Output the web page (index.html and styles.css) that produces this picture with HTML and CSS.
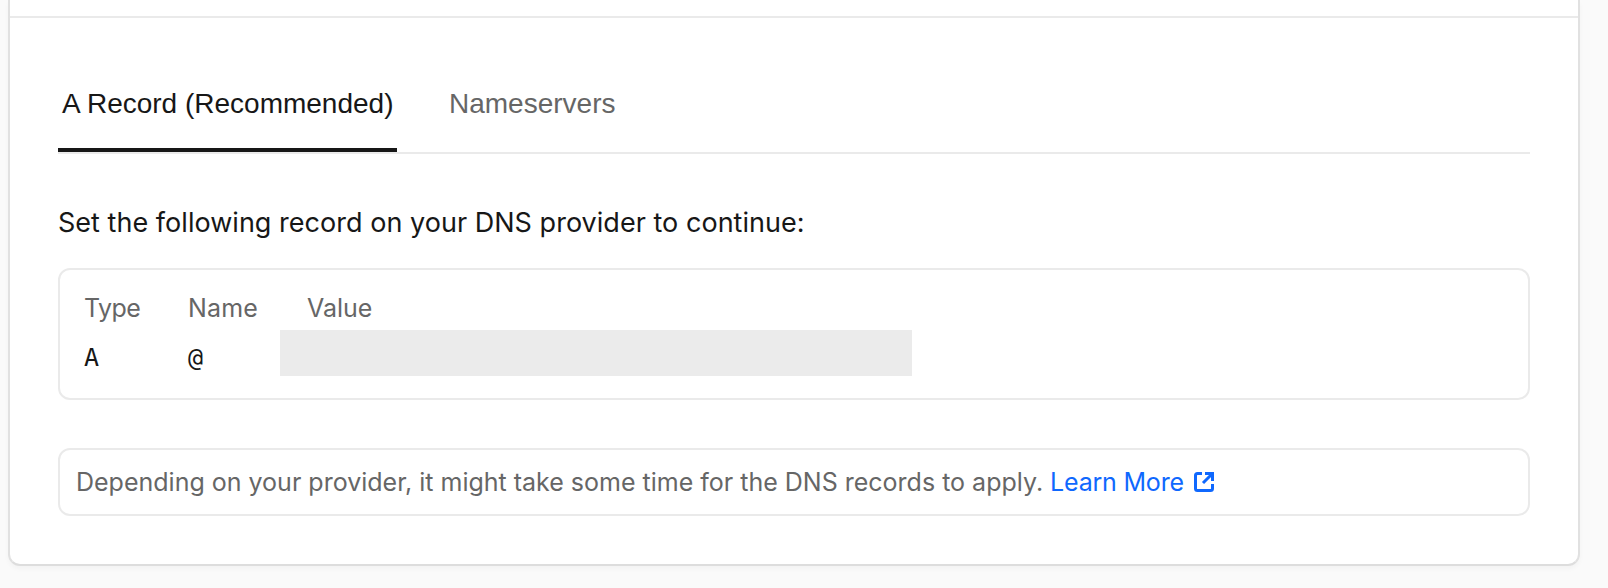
FILE: index.html
```html
<!DOCTYPE html>
<html lang="en">
<head>
<meta charset="utf-8">
<title>DNS records</title>
<link rel="stylesheet" href="styles.css">
</head>
<body>
<main class="card">
  <div class="card-top"></div>
  <section class="content">
    <nav class="tabs">
      <a class="tab tab-active"><span class="tab-label">A Record (Recommended)</span></a>
      <a class="tab"><span class="tab-label">Nameservers</span></a>
    </nav>
    <p class="intro"><span>Set the following record on your DNS provider to continue:</span></p>
    <div class="records">
      <div class="column column-type"><span class="head head-type">Type</span><span class="value">A</span></div>
      <div class="column column-name"><span class="head head-name">Name</span><span class="value">@</span></div>
      <div class="column"><span class="head head-value">Value</span><span class="redacted"></span></div>
    </div>
    <div class="note">
      <span class="note-text">Depending on your provider, it might take some time for the DNS records to apply.</span>
      <a class="link"><span class="link-text">Learn More</span>
        <svg class="icon" viewBox="0 0 20 20" fill="none" stroke="currentColor" stroke-width="3">
          <path d="M8 1.5H3.5Q1.5 1.5 1.5 3.5V16.5Q1.5 18.5 3.5 18.5H16.5Q18.5 18.5 18.5 16.5V12M11 1.5H18.5V9M18 2L9 11"/>
        </svg>
      </a>
    </div>
  </section>
</main>
</body>
</html>
```
FILE: styles.css
```css
* { box-sizing: border-box; }
body {
  margin: 0;
  height: 588px;
  overflow: hidden;
  padding: 0 28px 22px 8px;
  background: #fafafa;
  color: #171717;
  font-family: Inter, "Liberation Sans", sans-serif;
}
.card {
  height: 566px;
  border: 2px solid #e1e1e1;
  border-top: 0;
  border-bottom-color: #dddddd;
  border-radius: 0 0 12px 12px;
  background: #fff;
  box-shadow: 0 3px 5px rgba(0, 0, 0, 0.03);
}
.card-top { height: 18px; border-bottom: 2px solid #eaeaea; }
.content { padding: 0 48px; }
.tabs {
  display: flex;
  gap: 48px;
  height: 136px;
  border-bottom: 2px solid #eaeaea;
  font-family: "Liberation Sans", Arial, sans-serif;
  font-size: 28px;
  line-height: 40px;
  color: #666;
}
.tab { height: 134px; padding: 66px 4px 0; white-space: nowrap; }
.tab-active { width: 339px; color: #171717; border-bottom: 4px solid #171717; }
.intro {
  margin: 49px 0 0;
  font-size: 27px;
  letter-spacing: 0.03px;
  line-height: 40px;
  white-space: nowrap;
}
.records {
  display: flex;
  height: 132px;
  margin-top: 25px;
  padding: 20px 24px;
  border: 2px solid #eaeaea;
  border-radius: 12px;
  font-size: 26px;
}
.column { display: flex; flex-direction: column; align-items: flex-start; }
.column-type { width: 104px; }
.column-name { width: 119px; }
.head { line-height: 36px; color: #666; font-size: 25px; }
.head-type { letter-spacing: -0.6px; }
.head-name { letter-spacing: 0.2px; }
.value {
  margin-top: 14px;
  line-height: 36px;
  font-family: "DejaVu Sans Mono", monospace;
  font-size: 25px;
}
.redacted { width: 632px; height: 46px; margin: 4px 0 0 -27px; background: #ebebeb; }
.note {
  display: flex;
  align-items: center;
  height: 68px;
  margin-top: 48px;
  padding: 0 16px;
  border: 2px solid #eaeaea;
  border-radius: 12px;
  font-size: 25px;
  line-height: 40px;
  color: #666;
  white-space: nowrap;
}
.link { display: flex; align-items: center; gap: 10px; margin-left: 7px; color: #0f68fe; }
.link-text { letter-spacing: -0.2px; }
.icon { width: 20px; height: 20px; }
```
